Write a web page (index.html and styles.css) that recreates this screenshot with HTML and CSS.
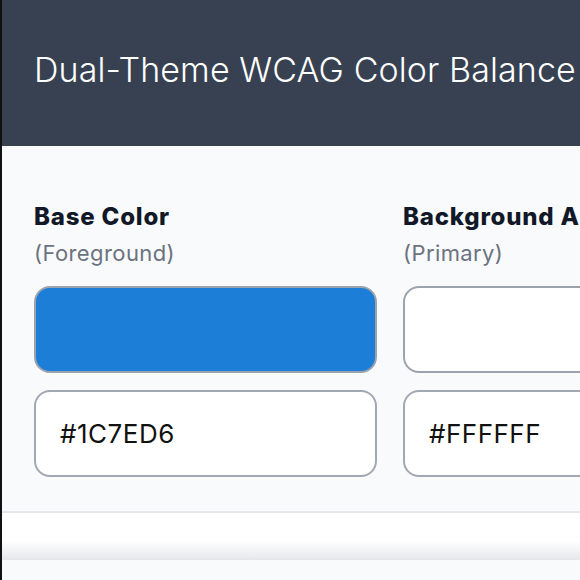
FILE: index.html
```html
<!DOCTYPE html>
<html lang="en">
  <head>
    <meta charset="UTF-8" />
    <meta name="viewport" content="width=device-width, initial-scale=1.0" />
    <title>Dual-Theme WCAG Color Balance</title>
    <link rel="stylesheet" href="styles.css">
  </head>
  <body>
    <header class="top">
      <h1>Dual-Theme WCAG Color Balance</h1>
    </header>
    <main class="inputs">
      <div class="field">
        <h2>Base Color</h2>
        <p class="sub">(Foreground)</p>
        <div class="swatch" style="background: #1C7ED6;"></div>
        <input class="hex" type="text" value="#1C7ED6">
      </div>
      <div class="field">
        <h2>Background A</h2>
        <p class="sub">(Primary)</p>
        <div class="swatch" style="background: #FFFFFF;"></div>
        <input class="hex" type="text" value="#FFFFFF">
      </div>
      <div class="field">
        <h2>Background B</h2>
        <p class="sub">(Secondary)</p>
        <div class="swatch" style="background: #212529;"></div>
        <input class="hex" type="text" value="#212529">
      </div>
    </main>
    <section class="results"></section>
  </body>
</html>
```

FILE: styles.css
```css
html, body {
  margin: 0;
  padding: 0;
}
body {
  font-family: 'Inter', sans-serif;
  background-color: #f9fafb;
  color: #111827;
  border-left: 2px solid #111;
  overflow: hidden;
  height: 580px;
}
.top {
  background-color: #374151;
  height: 146px;
  display: flex;
  align-items: center;
  padding-left: 32px;
  margin-left: -2px;
  border-left: 2px solid #4b5260;
}
.top h1 {
  margin: 0 0 8px;
  font-size: 34px;
  font-weight: 300;
  color: #fff;
  white-space: nowrap;
  letter-spacing: 0.1px;
}
.inputs {
  display: grid;
  grid-template-columns: repeat(3, 343px);
  column-gap: 26px;
  padding: 56px 0 34px 32px;
  border-bottom: 2px solid #e5e7eb;
}
.field h2 {
  margin: 0;
  font-size: 24px;
  font-weight: 800;
  white-space: nowrap;
  line-height: 30px;
  letter-spacing: 0.8px;
}
.sub {
  margin: 7px 0 19px;
  font-size: 22px;
  color: #6b7280;
  line-height: 28px;
  letter-spacing: 0.4px;
}
.swatch {
  box-sizing: border-box;
  height: 87px;
  border: 2px solid #9ca3af;
  border-radius: 16px;
}
.hex {
  display: block;
  box-sizing: border-box;
  width: 100%;
  height: 87px;
  margin-top: 17px;
  padding: 0 24px;
  border: 2px solid #a1a8b3;
  border-radius: 16px;
  background: #fff;
  font-family: 'Inter', sans-serif;
  font-size: 26px;
  letter-spacing: 0.5px;
  color: #111;
}
.results {
  height: 45px;
  background: linear-gradient(#fff 62%, #e9eaed);
  border-bottom: 2px solid #e5e7eb;
}
```
